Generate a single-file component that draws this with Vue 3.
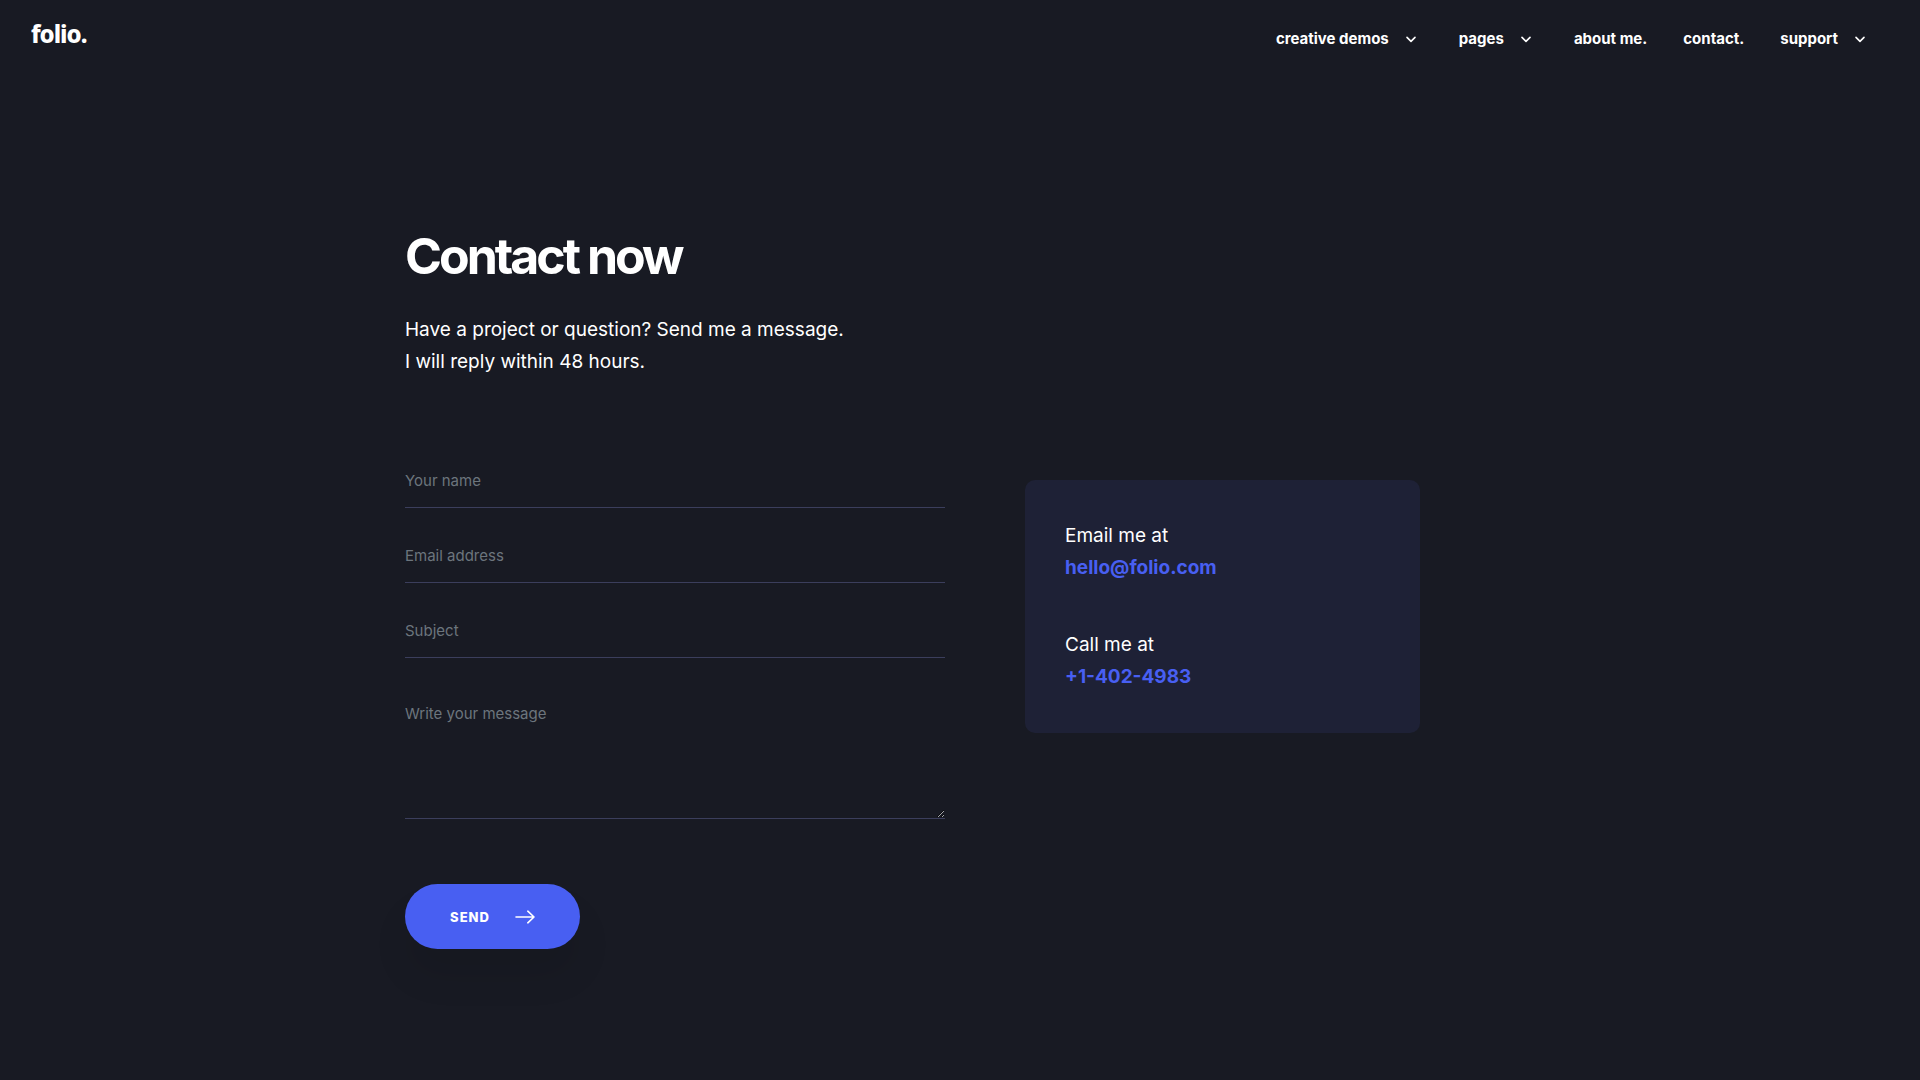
<script setup>
import { ref } from 'vue'

const links = [
  { label: 'creative demos', menu: true },
  { label: 'pages', menu: true },
  { label: 'about me.', menu: false },
  { label: 'contact.', menu: false },
  { label: 'support', menu: true }
]

const fields = [
  { id: 'name', label: 'Your name', type: 'text' },
  { id: 'email', label: 'Email address', type: 'email' },
  { id: 'subject', label: 'Subject', type: 'text' }
]

const form = ref({ name: '', email: '', subject: '', message: '' })
</script>

<template>
  <div class="page">
    <header class="topbar">
      <a class="logo" href="#">folio.</a>
      <nav class="nav" aria-label="Main">
        <a v-for="link in links" :key="link.label" class="nav-link" href="#">
          {{ link.label }}
          <svg v-if="link.menu" class="chevron" viewBox="0 0 12 8" aria-hidden="true">
            <path d="M2 2.4 L6 6.4 L10 2.4" />
          </svg>
        </a>
      </nav>
    </header>

    <main class="container">
      <h1 class="title">Contact now</h1>
      <p class="intro">Have a project or question? Send me a message.<br />I will reply within 48 hours.</p>

      <div class="columns">
        <form class="form" @submit.prevent>
          <input
            v-for="field in fields"
            :id="field.id"
            :key="field.id"
            v-model="form[field.id]"
            class="field"
            :type="field.type"
            :placeholder="field.label"
            :aria-label="field.label"
          />
          <textarea
            id="message"
            v-model="form.message"
            class="field message"
            placeholder="Write your message"
            aria-label="Write your message"
          ></textarea>
          <button class="send" type="submit">
            Send
            <svg class="arrow" viewBox="0 0 20 14" aria-hidden="true">
              <path d="M1 7 H19 M12.8 1.2 L19 7 L12.8 12.8" />
            </svg>
          </button>
        </form>

        <aside class="card">
          <p class="card-item">Email me at<a href="mailto:hello@folio.com">hello@folio.com</a></p>
          <p class="card-item">Call me at<a href="tel:+14024983">+1-402-4983</a></p>
        </aside>
      </div>
    </main>
  </div>
</template>

<style>
body {
  margin: 0;
  background: #181a23;
}
</style>

<style scoped>
.page {
  min-height: 100vh;
  box-sizing: border-box;
  background: #181a23;
  color: #fff;
  font-family: Inter, "Liberation Sans", sans-serif;
  font-size: 19px;
  line-height: 32px;
}

a {
  text-decoration: none;
}

.topbar {
  display: flex;
  justify-content: space-between;
  align-items: flex-start;
  padding: 18px 48px 0 31px;
}

.logo {
  color: #fff;
  font-family: "Noto Sans", sans-serif;
  font-size: 24px;
  font-weight: 800;
  letter-spacing: -1px;
}

.nav {
  display: flex;
  gap: 36px;
  padding-top: 5px;
}

.nav-link {
  display: flex;
  align-items: center;
  gap: 16px;
  color: #fff;
  font-size: 15px;
  font-weight: 700;
}

.chevron {
  width: 12px;
  height: 8px;
  margin-right: 6px;
}

.chevron path,
.arrow path {
  fill: none;
  stroke: #fff;
  stroke-width: 1.6;
  stroke-linecap: round;
  stroke-linejoin: round;
}

.container {
  max-width: 1110px;
  margin: 0 auto;
  padding: 171px 15px 80px;
}

.title {
  margin: 0;
  font-size: 50px;
  font-weight: 700;
  line-height: 60px;
  letter-spacing: -3px;
}

.intro {
  margin: 28px 0 0;
}

.columns {
  display: flex;
  align-items: flex-start;
  gap: 80px;
  padding-top: 75px;
}

.form {
  flex: 0 1 540px;
  display: flex;
  flex-direction: column;
  align-items: flex-start;
}

.field {
  box-sizing: border-box;
  width: 100%;
  height: 55px;
  margin: 0 0 20px;
  padding: 0;
  border: 0;
  border-bottom: 1px solid #3b3e5c;
  border-radius: 0;
  outline: 0;
  background: transparent;
  color: #fff;
  font-family: inherit;
  font-size: 15px;
}

.field::placeholder {
  color: #6c757d;
  opacity: 1;
}

.message {
  height: 141px;
  margin-bottom: 65px;
  padding-top: 25px;
  line-height: 22px;
  resize: vertical;
}

.send {
  display: flex;
  align-items: center;
  justify-content: center;
  gap: 25px;
  width: 175px;
  height: 65px;
  padding: 0;
  border: 0;
  border-radius: 33px;
  background: #485ff2;
  box-shadow: 0 28px 36px rgba(0, 0, 0, 0.08);
  color: #fff;
  font-family: inherit;
  font-size: 13px;
  font-weight: 800;
  letter-spacing: 1px;
  text-transform: uppercase;
}

.arrow {
  width: 20px;
  height: 14px;
}

.card {
  flex: 0 1 395px;
  box-sizing: border-box;
  display: flex;
  flex-direction: column;
  gap: 45px;
  margin-top: 27px;
  padding: 40px;
  border-radius: 10px;
  background: #1e2136;
}

.card-item {
  display: flex;
  flex-direction: column;
  margin: 0;
}

.card-item a {
  color: #485ff2;
  font-weight: 700;
}
</style>
